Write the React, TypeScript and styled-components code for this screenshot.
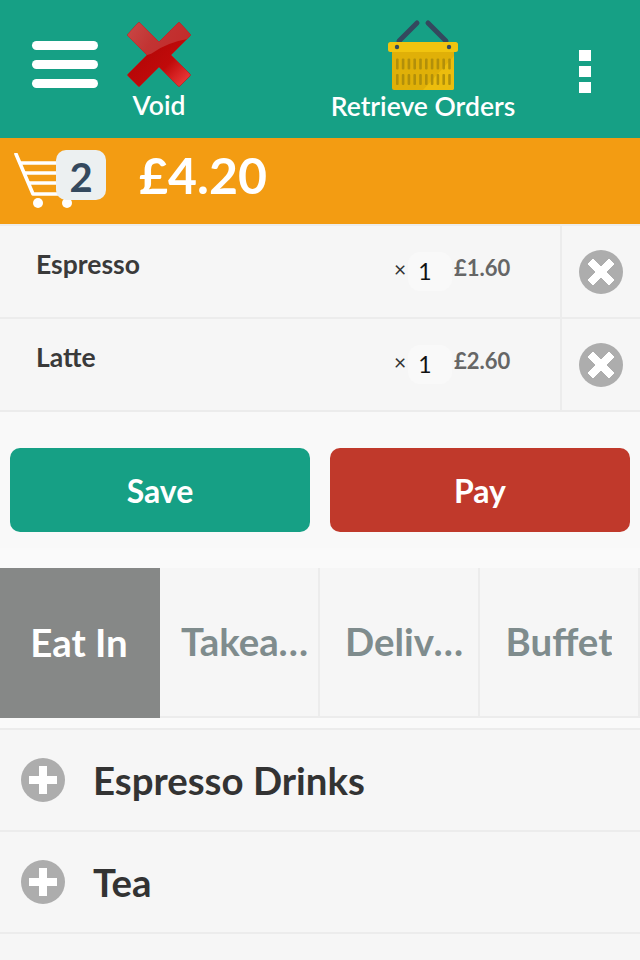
import React from "react";
import styled, { createGlobalStyle } from "styled-components";

const Global = createGlobalStyle`
  html, body { margin: 0; padding: 0; background: #f9f9f9; }
  body { font-family: Lato, "Open Sans", sans-serif; width: 640px; height: 960px; overflow: hidden; }
`;
const Page = styled.div`width: 640px; height: 960px; overflow: hidden; display: flex; flex-direction: column;`;
const Header = styled.header`
  height: 138px; background: #16a085; display: flex; flex-shrink: 0; color: #fff;
`;
const MenuButton = styled.div`
  width: 66px; margin: 41px 0 0 32px; height: 48px; display: flex; flex-direction: column; gap: 10px; flex-shrink: 0;
`;
const MenuBar = styled.span`height: 9px; border-radius: 5px; background: #fff; display: block;`;
const ToolButton = styled.div<{ $w: number; $ml: number }>`
  width: ${p => p.$w}px; margin-left: ${p => p.$ml}px; display: flex; flex-direction: column; align-items: center; flex-shrink: 0;
`;
const ToolIcon = styled.svg<{ $top: number; $bottom: number }>`
  display: block; margin-top: ${p => p.$top}px; margin-bottom: ${p => p.$bottom}px; flex-shrink: 0;
`;
const ToolLabel = styled.span`font-size: 26.5px; font-weight: 600; line-height: 30px; white-space: nowrap; color: #fff;`;
const Kebab = styled.div`margin: 50px 0 0 63px; display: flex; flex-direction: column; gap: 5px;`;
const KebabDot = styled.span`width: 12px; height: 11px; background: #fff; display: block;`;

const TotalBar = styled.div`height: 86px; background: #f39c12; display: flex; flex-shrink: 0;`;
const CartWrap = styled.div`position: relative; width: 106px; height: 86px; flex-shrink: 0;`;
const CartSvg = styled.svg`position: absolute; left: 14px; top: 15px;`;
const CartBadge = styled.span`
  position: absolute; left: 56px; top: 12px; width: 50px; height: 50px; border-radius: 10px; background: #ecf0f1;
  color: #34495e; font-weight: 700; font-size: 40px; line-height: 55px; text-align: center;
`;
const Total = styled.span`margin: 7px 0 0 33px; font-size: 50px; font-weight: 700; line-height: 60px; color: #fff;`;

const Lines = styled.div`flex-shrink: 0; border-top: 2px solid #ececec;`;
const Line = styled.div`
  height: 91px; display: flex; background: #f6f6f6; border-bottom: 2px solid #ececec;
`;
const LineName = styled.span`flex: 1; padding: 23px 0 0 36px; font-size: 26.5px; font-weight: 700; color: #3a3a3a; line-height: 30px;`;
const Times = styled.span`margin-top: 33px; font-size: 21px; line-height: 20px; color: #333; width: 14px;`;
const Qty = styled.span`
  width: 34px; height: 39px; margin-top: 26px; background: #f9f9f9; border-radius: 12px; text-align: center;
  font-size: 23px; line-height: 38px; color: #111; padding-right: 10px; margin-right: 2px;
`;
const Price = styled.span`width: 106px; flex-shrink: 0; padding: 27px 0 0 0; font-size: 22px; font-weight: 700; line-height: 30px; color: #666; box-sizing: border-box;`;
const Remove = styled.div`
  width: 80px; flex-shrink: 0; border-left: 2px solid #ececec; display: flex; align-items: center; justify-content: center; box-sizing: border-box;
`;
const RoundIcon = styled.svg`display: block;`;

const Actions = styled.div`height: 136px; flex-shrink: 0; background: #f9f9f9; display: flex; gap: 20px; padding: 36px 10px 16px; box-sizing: border-box;`;
const Action = styled.button<{ $bg: string }>`
  flex: 1; height: 84px; border: 0; border-radius: 10px; background: ${p => p.$bg}; color: #fff; font: 700 32px Lato, sans-serif; padding: 0;
`;
const Gap = styled.div`height: 20px; background: #fafafa; flex-shrink: 0;`;

const Tabs = styled.div`height: 150px; display: flex; flex-shrink: 0; background: #f6f6f6;`;
const Tab = styled.div<{ $active?: boolean; $pl: number }>`
  width: 160px; box-sizing: border-box; height: 150px; display: flex; align-items: center; justify-content: center;
  font-size: 38.4px; font-weight: 700; padding: 0 ${p => (p.$pl ? 4 : p.$active ? 2 : 0)}px 0 ${p => p.$pl}px;
  background: ${p => (p.$active ? "#868887" : "#f6f6f6")};
  color: ${p => (p.$active ? "#fff" : "#7f8c8d")};
  border-right: ${p => (p.$active ? "0" : "2px solid #ececec")};
  border-bottom: ${p => (p.$active ? "0" : "2px solid #ececec")};
`;
const TabText = styled.span`display: block; overflow: hidden; text-overflow: ellipsis; white-space: nowrap; padding-bottom: 3px;`;

const Spacer = styled.div`height: 10px; background: #fafafa; flex-shrink: 0;`;
const Categories = styled.div`border-top: 2px solid #ececec; flex-shrink: 0;`;
const Category = styled.div`
  height: 100px; display: flex; align-items: center; background: #f6f6f6; border-bottom: 2px solid #ececec; padding-left: 21px;
`;
const CategoryName = styled.span`margin-left: 28px; font-size: 38.4px; font-weight: 700; color: #333;`;
const Rest = styled.div`flex: 1; background: #f6f6f6;`;

const crossPath = "M14 1 33 20 52 1Q53 0 54 1L64 12Q65 13 64 14L45 33 64 52Q65 53 64 54L54 64Q53 65 52 64L33 45 14 64Q13 65 12 64L2 54Q1 53 2 52L21 33 2 14Q1 13 2 12L12 1Q13 0 14 1Z";

const VoidIcon = () => (
  <ToolIcon $top={22} $bottom={2} width="66" height="66" viewBox="0 0 66 66">
    <defs>
      <linearGradient id="void-base" x1="0" y1="0" x2="1" y2="1">
        <stop offset="0" stopColor="#a80404" />
        <stop offset="0.65" stopColor="#c00a0a" />
        <stop offset="1" stopColor="#f54444" />
      </linearGradient>
      <linearGradient id="void-gloss" x1="0" y1="0" x2="1" y2="0.3">
        <stop offset="0" stopColor="#c84a48" />
        <stop offset="0.5" stopColor="#c23433" />
        <stop offset="1" stopColor="#c22c2c" />
      </linearGradient>
      <clipPath id="void-clip"><path d={crossPath} /></clipPath>
    </defs>
    <path d={crossPath} fill="url(#void-base)" stroke="#a32b2b" strokeWidth="0.8" />
    <path d="M0 0H66V16Q42 20 28 30 18 37 0 31Z" fill="url(#void-gloss)" clipPath="url(#void-clip)" />
  </ToolIcon>
);

const BasketIcon = () => (
  <ToolIcon $top={19} $bottom={0} width="72" height="72" viewBox="0 0 72 72">
    <path d="M12 22 30 4M41 4 59 22" stroke="#34495e" strokeWidth="5" strokeLinecap="round" fill="none" />
    <rect x="5" y="30" width="62" height="41" rx="2" fill="#e0b008" />
    <path d="M67 37V69Q67 71 65 71H36Z" fill="#ecbd0d" />
    <rect x="1" y="23" width="70" height="10" rx="2.5" fill="#f1c40f" />
    <circle cx="10" cy="28" r="2.2" fill="#34495e" />
    <circle cx="62" cy="28" r="2.2" fill="#34495e" />
    {[0, 1, 2, 3, 4, 5, 6, 7, 8, 9].map(i => (
      <React.Fragment key={i}>
        <rect x={9 + i * 5.8} y="39.5" width="2.6" height="11" rx="1" fill="#a98a0b" opacity=".85" />
        <rect x={9 + i * 5.8} y="55" width="2.6" height="11" rx="1" fill="#a98a0b" opacity=".85" />
      </React.Fragment>
    ))}
  </ToolIcon>
);

const CartIcon = () => (
  <CartSvg width="62" height="62" viewBox="0 0 62 62">
    <path d="M2 1 19 41H46" fill="none" stroke="#fff" strokeWidth="3.6" strokeLinejoin="round" strokeLinecap="round" />
    <path d="M6 10H46M10 20H46M14 30H46" stroke="#fff" strokeWidth="3.4" fill="none" />
    <circle cx="24" cy="50" r="5" fill="#fff" />
    <circle cx="53" cy="50" r="5" fill="#fff" />
  </CartSvg>
);

const CloseCircle = () => (
  <RoundIcon width="44" height="44" viewBox="0 0 44 44">
    <circle cx="22" cy="22" r="22" fill="#adadad" />
    <path d="M14 9 22 17 30 9 35 14 27 22 35 30 30 35 22 27 14 35 9 30 17 22 9 14Z" fill="#fff" stroke="#fff" strokeWidth="1" strokeLinejoin="round" />
  </RoundIcon>
);
const PlusCircle = () => (
  <RoundIcon width="44" height="44" viewBox="0 0 44 44">
    <circle cx="22" cy="22" r="22" fill="#adadad" />
    <path d="M18 8H26V18H36V26H26V36H18V26H8V18H18Z" fill="#fff" />
  </RoundIcon>
);

const lines = [
  { name: "Espresso", price: "£1.60" },
  { name: "Latte", price: "£2.60" },
];
const tabs = [
  { t: "Eat In", pl: 0, active: true },
  { t: "Takeaway", pl: 21 },
  { t: "Delivery", pl: 25 },
  { t: "Buffet", pl: 0 },
];

export default function App() {
  return (
    <Page>
      <Global />
      <Header>
        <MenuButton><MenuBar /><MenuBar /><MenuBar /></MenuButton>
        <ToolButton $w={66} $ml={28}><VoidIcon /><ToolLabel>Void</ToolLabel></ToolButton>
        <ToolButton $w={186} $ml={138}><BasketIcon /><ToolLabel>Retrieve Orders</ToolLabel></ToolButton>
        <Kebab><KebabDot /><KebabDot /><KebabDot /></Kebab>
      </Header>
      <TotalBar>
        <CartWrap><CartIcon /><CartBadge>2</CartBadge></CartWrap>
        <Total>£4.20</Total>
      </TotalBar>
      <Lines>
        {lines.map(l => (
          <Line key={l.name}>
            <LineName>{l.name}</LineName>
            <Times>×</Times>
            <Qty>1</Qty>
            <Price>{l.price}</Price>
            <Remove><CloseCircle /></Remove>
          </Line>
        ))}
      </Lines>
      <Actions>
        <Action $bg="#16a085">Save</Action>
        <Action $bg="#c0392b">Pay</Action>
      </Actions>
      <Gap />
      <Tabs>
        {tabs.map(t => (
          <Tab key={t.t} $pl={t.pl} $active={t.active}><TabText>{t.t}</TabText></Tab>
        ))}
      </Tabs>
      <Spacer />
      <Categories>
        <Category><PlusCircle /><CategoryName>Espresso Drinks</CategoryName></Category>
        <Category><PlusCircle /><CategoryName>Tea</CategoryName></Category>
      </Categories>
      <Rest />
    </Page>
  );
}
